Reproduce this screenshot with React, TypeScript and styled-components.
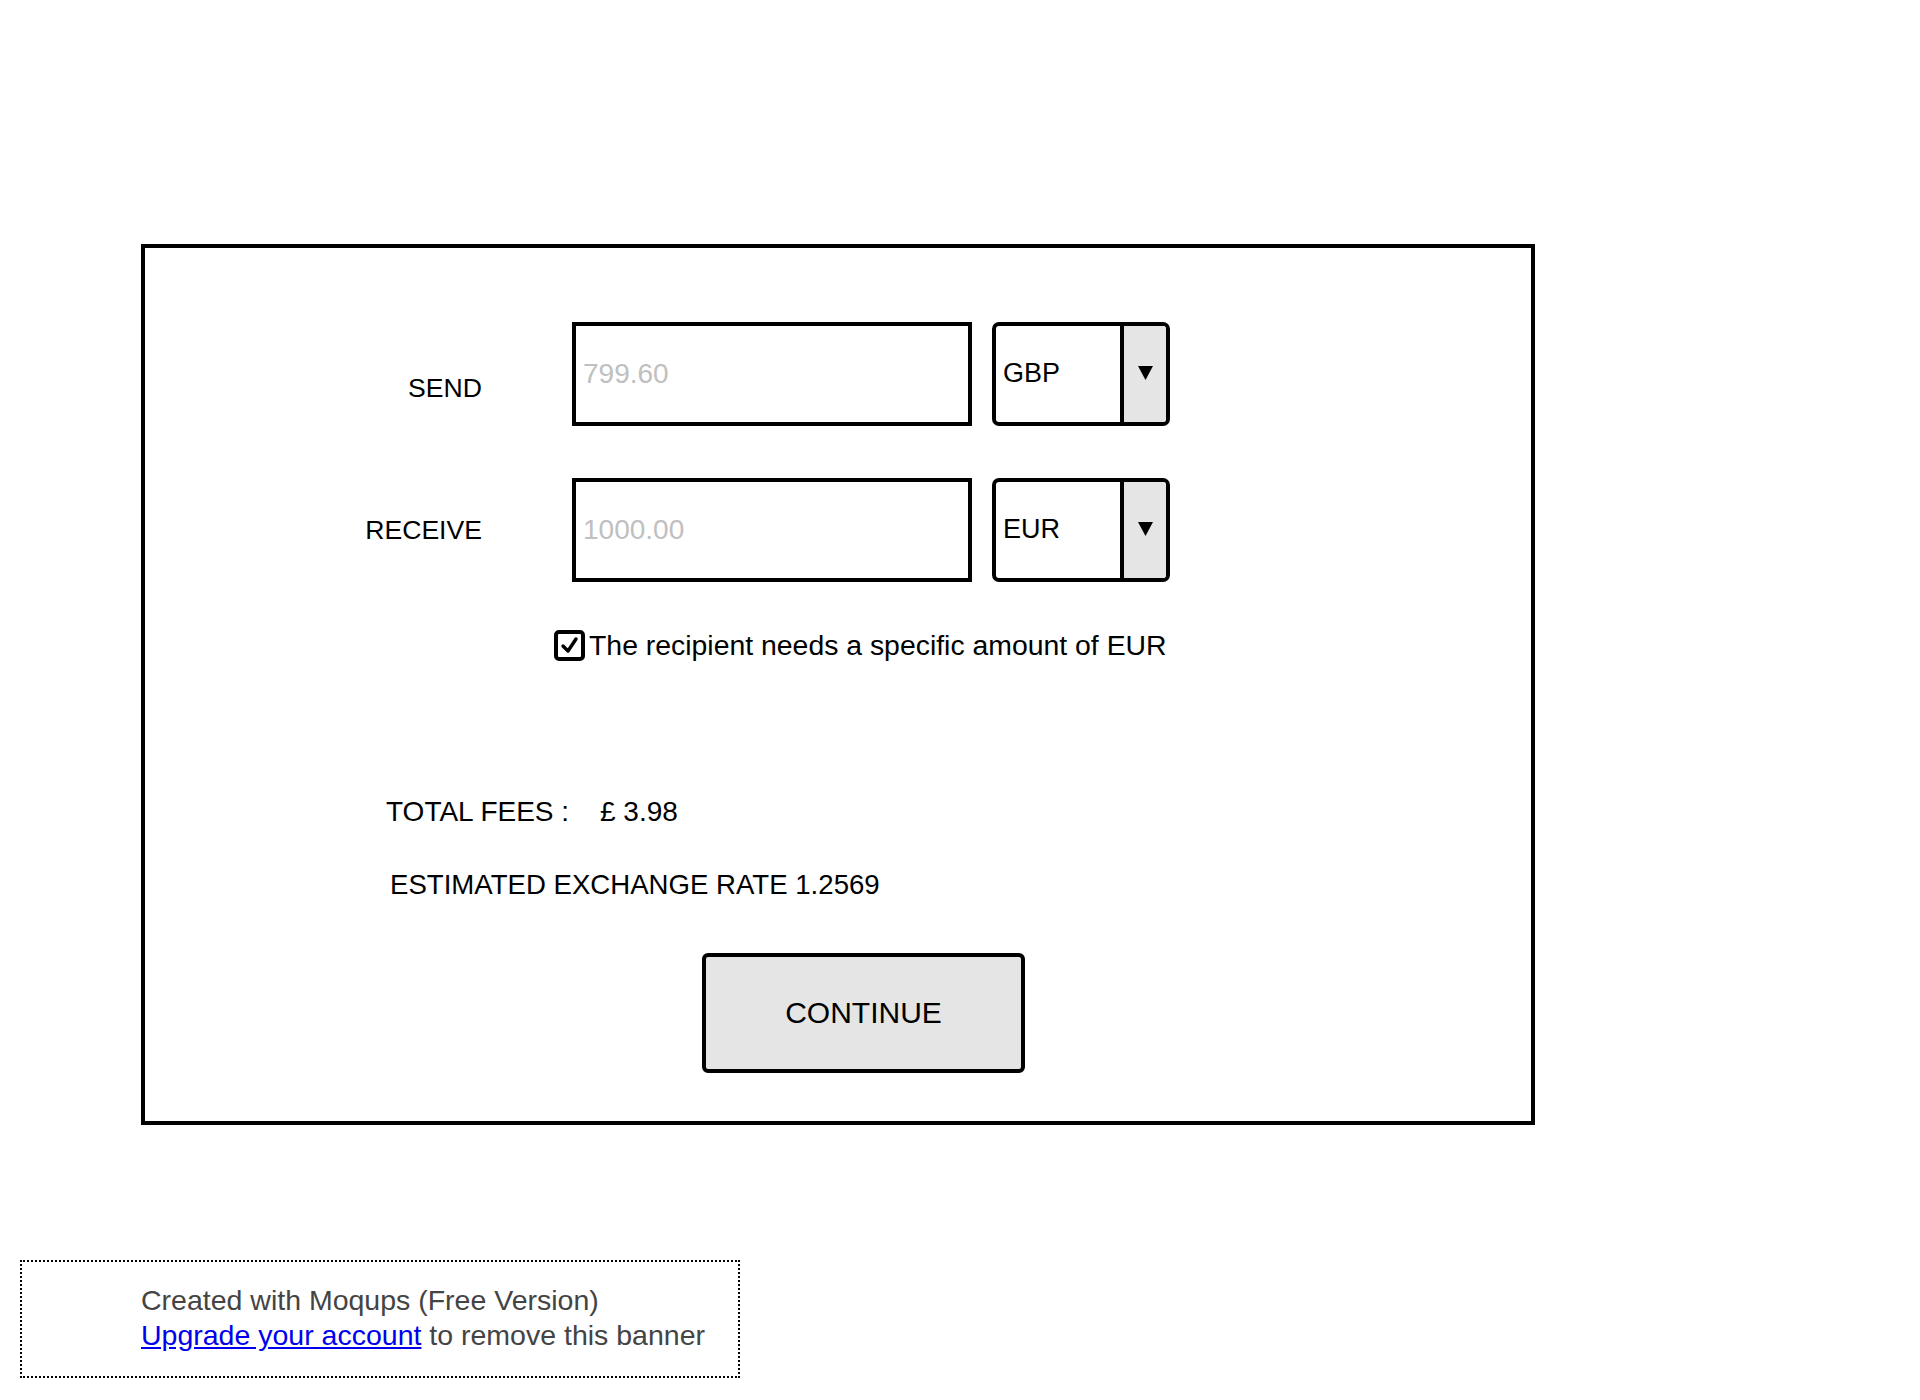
import React from "react";
import styled, { createGlobalStyle } from "styled-components";

const GlobalStyle = createGlobalStyle`
  html, body {
    margin: 0;
    padding: 0;
    background: #ffffff;
  }
  body {
    font-family: "Liberation Sans", Arial, Helvetica, sans-serif;
    color: #000;
  }
  * { box-sizing: border-box; }
`;

const Page = styled.div`
  width: 1920px;
  min-height: 1400px;
  padding-top: 244px;
  display: flex;
  flex-direction: column;
  align-items: flex-start;
`;

const Card = styled.section`
  margin-left: 141px;
  width: 1394px;
  height: 881px;
  border: 4px solid #000;
  padding-top: 74px;
  display: flex;
  flex-direction: column;
  align-items: flex-start;
`;

const FormGrid = styled.div`
  margin-left: 136px;
  display: grid;
  grid-template-columns: 271px 400px 178px;
  grid-auto-rows: 104px;
  column-gap: 20px;
  row-gap: 52px;
`;

const Label = styled.label<{ $shift: number }>`
  font-size: 26.6px;
  line-height: 31px;
  text-align: right;
  padding-right: 70px;
  align-self: center;
  transform: translateY(${(p) => p.$shift}px);
`;

const AmountInput = styled.input`
  width: 400px;
  height: 104px;
  border: 4px solid #000;
  border-radius: 0;
  background: #fff;
  padding: 0 7px;
  margin: 0;
  font-family: "Liberation Sans", Arial, sans-serif;
  font-size: 28px;
  color: #000;
  outline: none;
  &::placeholder {
    color: #c0c0c0;
    opacity: 1;
  }
`;

const Select = styled.div`
  width: 178px;
  height: 104px;
  border: 4px solid #000;
  border-radius: 7px;
  overflow: hidden;
  display: flex;
  background: #fff;
`;

const SelectValue = styled.span`
  flex: 1;
  display: flex;
  align-items: center;
  padding-left: 7px;
  font-size: 27px;
  padding-bottom: 2px;
`;

const SelectToggle = styled.span`
  width: 46px;
  border-left: 4px solid #000;
  background: #e5e5e5;
  display: flex;
  align-items: center;
  justify-content: center;
  padding-bottom: 3px;
`;

const CheckRow = styled.label`
  margin-top: 48px;
  margin-left: 409px;
  display: flex;
  align-items: center;
  gap: 4px;
  font-size: 28.4px;
  line-height: 31px;
`;

const CheckBox = styled.span`
  width: 31px;
  height: 31px;
  border: 4px solid #000;
  border-radius: 5px;
  display: flex;
  align-items: center;
  justify-content: center;
`;

const Summary = styled.div`
  margin-top: 135px;
  margin-left: 241px;
  display: flex;
  flex-direction: column;
  align-items: flex-start;
  font-size: 28px;
  line-height: 32px;
`;

const FeeRow = styled.div`
  display: flex;
`;

const FeeLabel = styled.span`
  width: 214px;
`;

const RateLine = styled.div`
  margin-top: 41px;
  margin-left: 4px;
  font-size: 27.6px;
`;

const ContinueButton = styled.button`
  margin-top: 52px;
  margin-left: 557px;
  width: 323px;
  height: 120px;
  border: 4px solid #000;
  border-radius: 6px;
  background: #e5e5e5;
  font-family: "Liberation Sans", Arial, sans-serif;
  font-size: 30px;
  color: #000;
  padding: 0;
  cursor: pointer;
`;

const Banner = styled.div`
  margin-top: 135px;
  margin-left: 20px;
  width: 720px;
  height: 118px;
  border: 2px dotted #000;
  padding: 21px 0 0 119px;
  font-size: 28.5px;
  line-height: 35px;
  color: #444;
`;

const BannerLink = styled.a`
  color: #0000ee;
  text-decoration: underline;
`;

const Arrow = () => (
  <svg width="15" height="14" viewBox="0 0 15 14">
    <polygon points="0,0 15,0 7.5,14" fill="#000" />
  </svg>
);

const Check = () => (
  <svg width="19" height="19" viewBox="0 0 19 19">
    <polyline
      points="3,10 8,15 16,3"
      fill="none"
      stroke="#000"
      strokeWidth="3.4"
      strokeLinecap="round"
      strokeLinejoin="round"
    />
  </svg>
);

type FieldProps = {
  label: string;
  shift: number;
  placeholder: string;
  currency: string;
};

const Field = ({ label, shift, placeholder, currency }: FieldProps) => (
  <>
    <Label $shift={shift}>{label}</Label>
    <AmountInput placeholder={placeholder} />
    <Select>
      <SelectValue>{currency}</SelectValue>
      <SelectToggle>
        <Arrow />
      </SelectToggle>
    </Select>
  </>
);

export default function App() {
  return (
    <>
      <GlobalStyle />
      <Page>
        <Card>
          <FormGrid>
            <Field label="SEND" shift={14} placeholder="799.60" currency="GBP" />
            <Field label="RECEIVE" shift={0} placeholder="1000.00" currency="EUR" />
          </FormGrid>
          <CheckRow>
            <CheckBox>
              <Check />
            </CheckBox>
            The recipient needs a specific amount of EUR
          </CheckRow>
          <Summary>
            <FeeRow>
              <FeeLabel>TOTAL FEES :</FeeLabel>
              <span>£ 3.98</span>
            </FeeRow>
            <RateLine>ESTIMATED EXCHANGE RATE 1.2569</RateLine>
          </Summary>
          <ContinueButton>CONTINUE</ContinueButton>
        </Card>
        <Banner>
          Created with Moqups (Free Version)
          <br />
          <BannerLink href="#">Upgrade your account</BannerLink> to remove this banner
        </Banner>
      </Page>
    </>
  );
}
